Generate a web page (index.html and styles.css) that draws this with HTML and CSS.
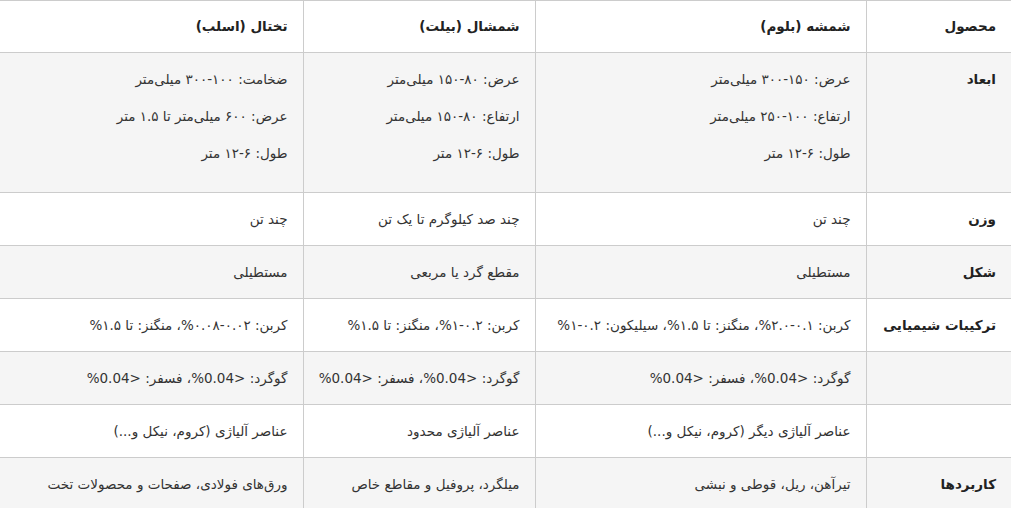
FILE: index.html
```html
<!DOCTYPE html>
<html lang="fa" dir="rtl">
<head>
<meta charset="utf-8">
<title>مقایسه محصولات فولادی</title>
<link rel="stylesheet" href="styles.css">
</head>
<body>
<table class="compare">
  <colgroup>
    <col class="c-label">
    <col class="c-bloom">
    <col class="c-billet">
    <col class="c-slab">
  </colgroup>
  <thead>
    <tr class="row-white">
      <th>محصول</th>
      <th>شمشه (بلوم)</th>
      <th>شمشال (بیلت)</th>
      <th>تختال (اسلب)</th>
    </tr>
  </thead>
  <tbody>
    <tr class="row-gray">
      <th>ابعاد</th>
      <td><p>عرض: ۱۵۰-۳۰۰ میلی‌متر</p><p>ارتفاع: ۱۰۰-۲۵۰ میلی‌متر</p><p>طول: ۶-۱۲ متر</p></td>
      <td><p>عرض: ۸۰-۱۵۰ میلی‌متر</p><p>ارتفاع: ۸۰-۱۵۰ میلی‌متر</p><p>طول: ۶-۱۲ متر</p></td>
      <td><p>ضخامت: ۱۰۰-۳۰۰ میلی‌متر</p><p>عرض: ۶۰۰ میلی‌متر تا ۱.۵ متر</p><p>طول: ۶-۱۲ متر</p></td>
    </tr>
    <tr class="row-white">
      <th>وزن</th>
      <td>چند تن</td>
      <td>چند صد کیلوگرم تا یک تن</td>
      <td>چند تن</td>
    </tr>
    <tr class="row-gray">
      <th>شکل</th>
      <td>مستطیلی</td>
      <td>مقطع گرد یا مربعی</td>
      <td>مستطیلی</td>
    </tr>
    <tr class="row-white">
      <th>ترکیبات شیمیایی</th>
      <td>کربن: ۰.۱-۲.۰%، منگنز: تا ۱.۵%، سیلیکون: ۰.۲-۱%</td>
      <td>کربن: ۰.۲-۱%، منگنز: تا ۱.۵%</td>
      <td>کربن: ۰.۰۲-۰.۰۸%، منگنز: تا ۱.۵%</td>
    </tr>
    <tr class="row-gray">
      <th></th>
      <td>گوگرد: &lt;0.04%، فسفر: &lt;0.04%</td>
      <td>گوگرد: &lt;0.04%، فسفر: &lt;0.04%</td>
      <td>گوگرد: &lt;0.04%، فسفر: &lt;0.04%</td>
    </tr>
    <tr class="row-white">
      <th></th>
      <td>عناصر آلیاژی دیگر (کروم، نیکل و...)</td>
      <td>عناصر آلیاژی محدود</td>
      <td>عناصر آلیاژی (کروم، نیکل و...)</td>
    </tr>
    <tr class="row-gray">
      <th>کاربردها</th>
      <td>تیرآهن، ریل، قوطی و نبشی</td>
      <td>میلگرد، پروفیل و مقاطع خاص</td>
      <td>ورق‌های فولادی، صفحات و محصولات تخت</td>
    </tr>
  </tbody>
</table>
</body>
</html>
```
FILE: styles.css
```css
html, body {
  margin: 0;
  padding: 0;
  background: #ffffff;
}

body {
  font-family: "DejaVu Sans", "Noto Sans", sans-serif;
  font-size: 13.5px;
  color: #333333;
  direction: rtl;
}

.compare {
  width: 1011px;
  border-collapse: collapse;
  table-layout: fixed;
}

.c-label { width: 145px; }
.c-bloom { width: 331px; }
.c-billet { width: 232px; }
.c-slab { width: 303px; }

.compare th,
.compare td {
  border: 1px solid #cccccc;
  padding: 15px;
  line-height: 22px;
  text-align: right;
  vertical-align: top;
  white-space: nowrap;
}

.compare tbody th {
  padding-left: 4px;
}

.compare thead th {
  padding-top: 14px;
}

.compare tr > :first-child { border-right: none; }
.compare tr > :last-child { border-left: none; }

.compare th {
  font-weight: bold;
  color: #222222;
}

.compare td {
  font-weight: normal;
}

.row-white { background: #ffffff; }
.row-gray { background: #f5f5f5; }

.compare p {
  margin: 0 0 15px 0;
}

.compare p:last-child {
  margin-bottom: 13px;
}
```
